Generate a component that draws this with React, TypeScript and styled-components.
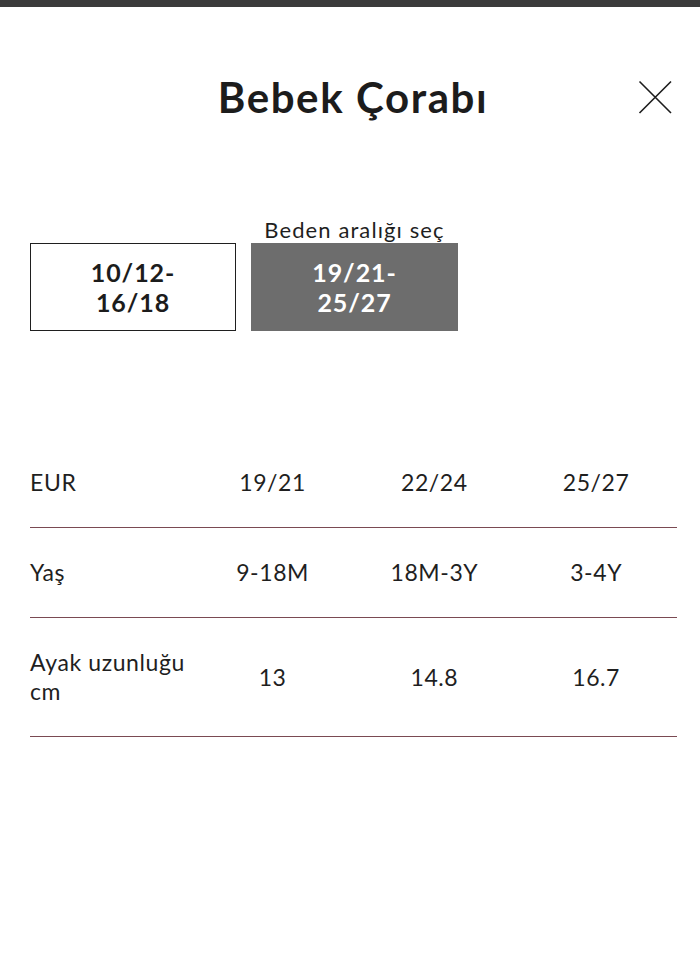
import React from "react";
import styled, { createGlobalStyle } from "styled-components";

const Global = createGlobalStyle`
  html, body { margin: 0; padding: 0; background: #fff; }
  body { font-family: "Lato", "Noto Sans", sans-serif; color: #1f1f1f; }
  * { box-sizing: border-box; }
`;

const Page = styled.div`
  width: 700px;
  min-height: 980px;
  background: #fff;
  display: flex;
  flex-direction: column;
`;

const TopBar = styled.div`
  height: 7px;
  background: #3b3b3b;
`;

const Header = styled.header`
  margin-top: 57px;
  height: 66px;
  padding: 0 28px 0 34px;
  display: grid;
  grid-template-columns: 1fr auto 1fr;
  align-items: center;
`;

const Title = styled.h1`
  grid-column: 2;
  margin: 0;
  font-size: 42px;
  font-weight: 700;
  letter-spacing: 1.6px;
  color: #1c1c1c;
`;

const Close = styled.button`
  grid-column: 3;
  justify-self: end;
  width: 34px;
  height: 34px;
  padding: 0;
  border: 0;
  background: none;
  display: flex;
  align-items: center;
  justify-content: center;
`;

const Picker = styled.section`
  margin-top: 87px;
  padding-left: 30px;
  display: grid;
  grid-template-columns: 206px 207px;
  column-gap: 15px;
  align-items: end;
`;

const Column = styled.div`
  display: flex;
  flex-direction: column;
  align-items: center;
`;

const PickerLabel = styled.div`
  font-size: 22px;
  line-height: 26px;
  letter-spacing: 1.1px;
  color: #1f1f1f;
`;

const RangeButton = styled.button<{ $active?: boolean }>`
  width: 100%;
  height: 88px;
  border: 1px solid ${(p) => (p.$active ? "#6d6d6d" : "#1f1f1f")};
  background: ${(p) => (p.$active ? "#6d6d6d" : "#fff")};
  color: ${(p) => (p.$active ? "#fff" : "#1c1c1c")};
  font-family: inherit;
  font-size: 25px;
  font-weight: 700;
  line-height: 30px;
  letter-spacing: 0.9px;
  display: flex;
  flex-direction: column;
  align-items: center;
  justify-content: center;
  gap: 0;
  padding: 0;
`;

const Table = styled.div`
  margin: 107px 23px 0 30px;
  display: flex;
  flex-direction: column;
`;

const Row = styled.div`
  display: grid;
  grid-template-columns: repeat(4, 1fr);
  align-items: center;
  padding: 30px 0;
  border-bottom: 1px solid #7a4a52;
`;

const Cell = styled.div<{ $label?: boolean }>`
  font-size: 23px;
  line-height: 29px;
  letter-spacing: 0.6px;
  text-align: ${(p) => (p.$label ? "left" : "center")};
  color: #1f1f1f;
`;

const rows: { label: React.ReactNode; values: string[] }[] = [
  { label: "EUR", values: ["19/21", "22/24", "25/27"] },
  { label: "Yaş", values: ["9-18M", "18M-3Y", "3-4Y"] },
  {
    label: (
      <>
        Ayak uzunluğu
        <br />
        cm
      </>
    ),
    values: ["13", "14.8", "16.7"],
  },
];

export default function App() {
  return (
    <Page>
      <Global />
      <TopBar />
      <Header>
        <Title>Bebek Çorabı</Title>
        <Close aria-label="Kapat">
          <svg width="34" height="34" viewBox="0 0 34 34">
            <path d="M1.5 1.5 L33 33 M33 1.5 L1.5 33" stroke="#1c1c1c" strokeWidth="1.6" fill="none" />
          </svg>
        </Close>
      </Header>
      <Picker>
        <Column>
          <RangeButton>
            <span>10/12-</span>
            <span>16/18</span>
          </RangeButton>
        </Column>
        <Column>
          <PickerLabel>Beden aralığı seç</PickerLabel>
          <RangeButton $active>
            <span>19/21-</span>
            <span>25/27</span>
          </RangeButton>
        </Column>
      </Picker>
      <Table>
        {rows.map((r, i) => (
          <Row key={i}>
            <Cell $label>{r.label}</Cell>
            {r.values.map((v) => (
              <Cell key={v}>{v}</Cell>
            ))}
          </Row>
        ))}
      </Table>
    </Page>
  );
}
